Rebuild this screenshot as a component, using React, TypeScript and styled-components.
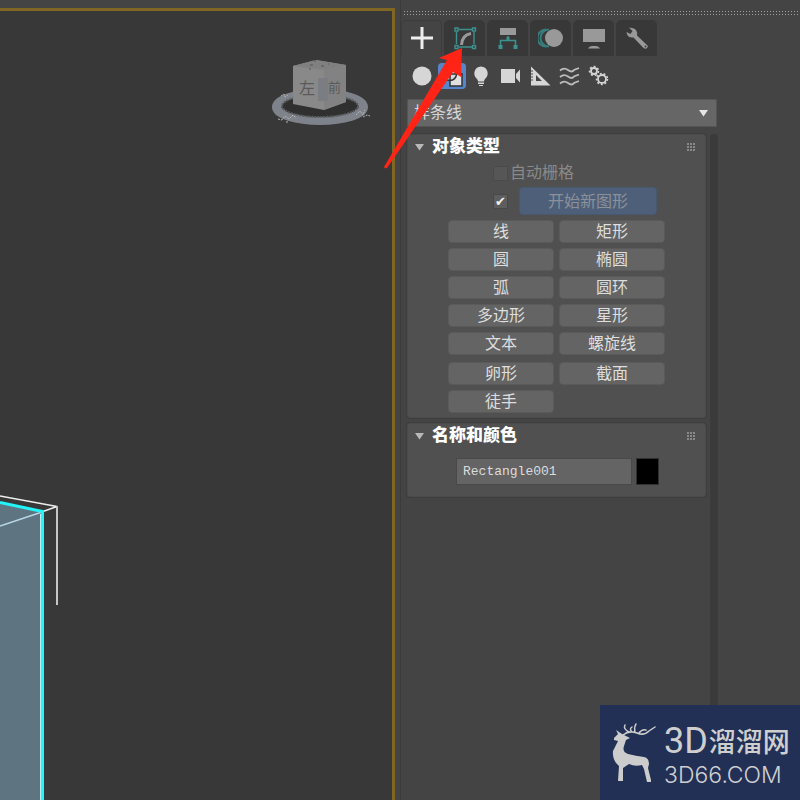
import React from "react";
import styled, { createGlobalStyle } from "styled-components";

const GlobalStyle = createGlobalStyle`
  *, *::before, *::after { box-sizing: border-box; }
  body { margin: 0; background: #444444; }
  button, input, select { font: inherit; color: inherit; margin: 0; }
`;

const sans = `"Liberation Sans", "Noto Sans CJK SC", sans-serif`;

const Workspace = styled.div`
  position: relative;
  display: flex;
  min-height: 100vh;
  background: #444444;
  color: #dedede;
  font-family: ${sans};
  font-size: 16px;
  line-height: 20px;
  overflow: hidden;
`;

const Viewport = styled.main`
  position: relative;
  flex: 1;
  min-width: 0;
  margin-top: 8px;
  background: #383838;
  border-top: 3px solid #806824;
  border-right: 3px solid #806824;
  overflow: hidden;
`;

const ViewCube = styled.svg`
  position: absolute;
  top: 43px;
  right: 17px;
`;

const SceneBox = styled.svg`
  position: absolute;
  left: 0;
  top: 479px;
`;

const CommandPanel = styled.aside`
  position: relative;
  display: flex;
  flex-direction: column;
  width: 400px;
  margin-left: 5px;
  border-left: 1px solid #3b3b3b;
`;

const Grip = styled.div`
  height: 6px;
  margin: 10px 0 4px 2px;
  background-image: radial-gradient(circle, #a0a0a0 1px, transparent 1px);
  background-size: 3px 3px;
`;

const Tabs = styled.nav`
  display: flex;
  gap: 2px;
`;

const Tab = styled.button<{ $active?: boolean }>`
  display: flex;
  align-items: center;
  justify-content: center;
  width: 41px;
  height: 36px;
  padding: 0;
  border: 1px solid ${(p) => (p.$active ? "#3c3c3c" : "#383838")};
  border-bottom-color: ${(p) => (p.$active ? "#444444" : "#383838")};
  border-radius: 5px 5px 0 0;
  background: ${(p) => (p.$active ? "#444444" : "#383838")};
`;

const Categories = styled.div`
  display: flex;
  gap: 3px;
  padding: 7px 0 10px 8px;
`;

const Category = styled.button<{ $active?: boolean }>`
  display: flex;
  align-items: center;
  justify-content: center;
  width: ${(p) => (p.$active ? "28px" : "26px")};
  height: 26px;
  padding: 0;
  border: 0;
  border-radius: 4px;
  background: ${(p) => (p.$active ? "#5586cb" : "transparent")};
`;

const SelectWrap = styled.label`
  display: grid;
  width: 310px;
  margin-left: 6px;
  align-items: center;

  > * { grid-area: 1 / 1; }
  > svg { justify-self: end; margin-right: 9px; pointer-events: none; }
`;

const Select = styled.select`
  appearance: none;
  height: 28px;
  padding: 0 24px 0 6px;
  border: 1px solid #555555;
  border-radius: 1px;
  background: #666666;
  color: #d8d8d8;
`;

const ScrollArea = styled.div`
  display: flex;
  flex: 1;
  gap: 4px;
  padding: 7px 0 0 6px;
`;

const Rollouts = styled.div`
  display: flex;
  flex-direction: column;
  gap: 5px;
  width: 299px;
`;

const ScrollTrack = styled.div`
  width: 8px;
  border-radius: 4px 4px 0 0;
  background: #3b3b3b;
`;

const Rollout = styled.section`
  padding-bottom: 5px;
  border: 1px solid #4b4b4b;
  border-radius: 3px;
  background: #505050;
  box-shadow: 0 0 0 1px #3e3e3e;
`;

const RolloutHeader = styled.button`
  display: flex;
  align-items: center;
  width: 100%;
  height: 24px;
  padding: 0 9px 0 7px;
  border: 0;
  background: none;
  color: #ffffff;
  text-align: left;
`;

const Title = styled.span`
  flex: 1;
  margin-left: 8px;
  font-size: 17px;
  font-weight: 900;
`;

const OptionRow = styled.div<{ $disabled?: boolean }>`
  display: flex;
  align-items: center;
  height: 28px;
  padding-left: 85px;
  color: ${(p) => (p.$disabled ? "#898989" : "#dedede")};
`;

const Check = styled.input`
  appearance: none;
  display: grid;
  place-items: center;
  width: 15px;
  height: 15px;
  border: 1px solid #484848;
  border-radius: 1px;
  background: #5e5e5e;

  &:disabled { background: #565656; border-color: #4a4a4a; }
  &:checked::before {
    content: "✔";
    color: #f2f2f2;
    font: 13px/13px "DejaVu Sans", sans-serif;
  }
`;

const CheckLabel = styled.label`
  margin-left: 2px;
`;

const StartShape = styled.button`
  width: 138px;
  height: 28px;
  margin-left: 11px;
  padding: 2px 0 0;
  border: 1px solid #485870;
  border-radius: 4px;
  background: #4e5f79;
  color: #8c9199;
`;

const ObjectGrid = styled.div`
  display: grid;
  grid-template-columns: 106px 106px;
  grid-template-rows: repeat(4, 22px) 24px repeat(2, 22px);
  gap: 6px 5px;
  margin: 5px 0 0 40px;
`;

const ObjectButton = styled.button`
  height: 23px;
  padding: 0;
  border: 1px solid #5a5a5a;
  border-radius: 4px;
  background: #646464;
  color: #dedede;
  line-height: 20px;
`;

const NameRow = styled.div`
  display: flex;
  align-items: center;
  gap: 4px;
  padding: 10px 0 6px 48px;
`;

const NameInput = styled.input`
  width: 176px;
  height: 27px;
  padding: 0 6px;
  border: 1px solid #494949;
  background: #646464;
  color: #dcdcdc;
  font-family: "Liberation Mono", monospace;
  font-size: 13px;
`;

const Swatch = styled.button`
  width: 23px;
  height: 27px;
  padding: 0;
  border: 1px solid #303030;
  background: #000000;
`;

const Pointer = styled.svg`
  position: absolute;
  left: -21px;
  top: 44px;
  pointer-events: none;
`;

const Brand = styled.div`
  position: absolute;
  right: 0;
  bottom: 0;
  display: flex;
  gap: 8px;
  width: 200px;
  height: 95px;
  padding: 18px 0 0 12px;
  background: #233056;
  color: #cfcfcf;
`;

const BrandText = styled.div`
  display: flex;
  flex-direction: column;
  white-space: nowrap;
`;

const BrandName = styled.div`
  display: flex;
  align-items: center;
  gap: 1px;
  height: 36px;
  font-family: Roboto, sans-serif;
  font-size: 36px;
  line-height: 36px;
`;

const BrandHan = styled.span`
  font-family: "Noto Sans CJK SC", sans-serif;
  font-size: 27px;
  font-weight: 500;
`;

const BrandSite = styled.div`
  font-family: Inter, sans-serif;
  font-size: 23px;
  font-weight: 300;
  line-height: 24px;
  margin-top: 4px;
`;

const DownArrow = ({ color = "#b8b8b8" }: { color?: string }) => (
  <svg width="9" height="8" viewBox="0 0 9 8" aria-hidden="true">
    <path d="M0 1H9L4.5 7.5Z" fill={color} />
  </svg>
);

const Dots = () => (
  <svg width="9" height="9" viewBox="0 0 9 9" fill="#898989" aria-hidden="true">
    {[0, 3, 6].map((y) => [0, 3, 6].map((x) => <rect key={`${x}${y}`} x={x} y={y} width="2" height="2" />))}
  </svg>
);

const gear = (cx: number, cy: number, r: number, teeth: number) => (
  <g fill="none" stroke="#d6d6d6">
    <circle cx={cx} cy={cy} r={r} strokeWidth="1.800" />
    <circle cx={cx} cy={cy} r={r + 1.5} strokeWidth="1.500" strokeDasharray={`${((r + 1.5) * Math.PI) / teeth}`} />
  </g>
);

const tabs: { name: string; icon: React.ReactNode }[] = [
  { name: "创建", icon: <path d="M13 2V24M2 13H24" stroke="#eeeeee" strokeWidth="3" fill="none" /> },
  {
    name: "修改",
    icon: (
      <g fill="none" stroke="#3c9290" strokeWidth="1.4">
        <path d="M7 4.5H20M7 22H20M4.5 7V19M22 7V19" />
        <path d="M3 3h3v3H3ZM20.500 3h3v3h-3ZM3 20.500h3v3H3ZM20.500 20.500h3v3h-3Z" />
        <path d="M9.500 20Q10 10 19 8.500" stroke="#999" strokeWidth="3" />
      </g>
    ),
  },
  {
    name: "层次",
    icon: (
      <g>
        <path d="M5 3H21V10H5Z" fill="#999" />
        <path d="M13 11V15M5.500 20V15.500H20.500V20" stroke="#3c9290" strokeWidth="1.5" fill="none" />
        <path d="M3.500 20h4v4h-4ZM18.500 20h4v4h-4ZM11.500 12h3v4h-3Z" fill="#3c9290" />
      </g>
    ),
  },
  {
    name: "运动",
    icon: (
      <g>
        <path d="M8 4.500A8.500 8.500 0 0 0 8 21.500M11 4.500A8.500 8.500 0 0 0 11 21.500" fill="none" stroke="#367d7c" strokeWidth="2" />
        <circle cx="16" cy="13" r="9" fill="#999" />
      </g>
    ),
  },
  { name: "显示", icon: <path d="M2 4H24V17H2ZM7 23.500Q8 21 11 21H15Q18 21 19 23.500Z" fill="#999" /> },
  {
    name: "实用程序",
    icon: (
      <g>
        <path d="M8 3 5 2.500 8.500 6 6.500 9 2.500 7Q3 13 9.500 12.500L19.500 23Q23 25 24 21L13 10.500Q14 4 8 3Z" fill="#999" />
        <circle cx="21.500" cy="21.500" r="1" fill="#444" />
      </g>
    ),
  },
];

const categories: { name: string; icon: React.ReactNode }[] = [
  { name: "几何体", icon: <circle cx="11" cy="11" r="9.500" fill="#d6d6d6" /> },
  {
    name: "图形",
    icon: (
      <g>
        <path d="M9 9H21V21H9Z" fill="#e0e0e0" stroke="#333" strokeWidth="1.500" />
        <circle cx="9" cy="9" r="6.500" fill="#d6d6d6" stroke="#333" strokeWidth="1.500" />
        <path d="M9 15.500V9H15.500" fill="none" stroke="#333" strokeWidth="1.500" />
      </g>
    ),
  },
  {
    name: "灯光",
    icon: (
      <g fill="#d6d6d6">
        <path d="M10 1.500A7 7 0 0 0 6 14Q7 15 7 16.500H13Q13 15 14 14A7 7 0 0 0 10 1.500Z" />
        <path d="M7 17.500h6v1.500H7ZM8 20h4v1H8Z" />
      </g>
    ),
  },
  { name: "摄影机", icon: <path d="M1 4H15V18H1ZM16 9 20 4.500V17.500L16 13Z" fill="#d6d6d6" /> },
  {
    name: "辅助对象",
    icon: (
      <g>
        <path fillRule="evenodd" d="M2 1.500 21.500 20.500H2ZM7 10V16H13Z" fill="#d6d6d6" />
        <path d="M2 6H4M2 9H4M2 12H4M2 15H4" stroke="#444" />
      </g>
    ),
  },
  {
    name: "空间扭曲",
    icon: <path d="M2 5.500Q6 2 10 5T16 5L21 3M2 12Q6 8.500 10 11.500T16 11.500L21 9.500M2 18.500Q6 15 10 18T16 18L21 16" fill="none" stroke="#bdbdbd" strokeWidth="1.8" />,
  },
  { name: "系统", icon: <g>{gear(7, 6, 3, 7)}{gear(15, 14, 4, 9)}</g> },
];

const objects = ["线", "矩形", "圆", "椭圆", "弧", "圆环", "多边形", "星形", "文本", "螺旋线", "卵形", "截面", "徒手"];

export default function App() {
  return (
    <Workspace>
      <GlobalStyle />
      <Viewport>
        <ViewCube width="108" height="74" viewBox="267 54 108 74" aria-label="ViewCube">
          <ellipse cx="320" cy="107" rx="43.500" ry="13.500" fill="#303030" stroke="#7e828a" strokeWidth="9" />
          <ellipse cx="320" cy="106" rx="38" ry="11" fill="#303030" stroke="#5b5d61" strokeWidth="2" strokeDasharray="2 1" />
          <path d="M293 66 316 60 346 65V102L324 110 293 104Z" fill="#898989" />
          <path d="M293 66 316 60 346 65 324 70Z" fill="#808080" />
          <path d="M324 70 346 65V102L324 110Z" fill="#828282" />
          <path d="M318 78H328V101H318Z" fill="#7a7d81" />
          <g fill="#5a5a5a" fontFamily="Noto Sans CJK SC, sans-serif">
            <text x="299" y="94" fontSize="16">左</text>
            <text x="328" y="92" fontSize="13">前</text>
          </g>
          <path d="M310 65h3M321 66h3M314 61h2M328 64h1M309 69h2" stroke="#555" />
          <path d="M281 96l3-2 1 3 3-2M278 119l4 1 3-4 4 3 4-4 3 3M286 122h3M356 115l4-4 3 4 2-5M363 117l4-2 3 1" fill="none" stroke="#b5b5b5" strokeDasharray="2 1" />
        </ViewCube>
        <SceneBox width="60" height="310" viewBox="0 490 60 310" aria-hidden="true">
          <path d="M0 502 43 511V800H0Z" fill="#5e7581" />
          <path d="M0 496 57 506.500M43 511.500 57 506.500" stroke="#eeeeee" strokeWidth="1.500" fill="none" />
          <path d="M57 506V605" stroke="#c6c6c6" strokeWidth="2" />
          <path d="M0 526 42 512" stroke="#b6d7e5" strokeWidth="1.500" />
          <path d="M0 502.500 42.500 511.500V800" fill="none" stroke="#21f4fa" strokeWidth="3" />
          <path d="M40.500 514V800" stroke="#bdebf2" strokeWidth="1" />
        </SceneBox>
      </Viewport>

      <CommandPanel>
        <Grip />
        <Tabs aria-label="命令面板">
          {tabs.map((tab, i) => (
            <Tab key={tab.name} $active={i === 0} aria-label={tab.name}>
              <svg width="26" height="26" viewBox="0 0 26 26">{tab.icon}</svg>
            </Tab>
          ))}
        </Tabs>
        <Categories>
          {categories.map((category, i) => (
            <Category key={category.name} $active={i === 1} aria-label={category.name}>
              <svg width="22" height="22" viewBox="0 0 22 22">{category.icon}</svg>
            </Category>
          ))}
        </Categories>
        <SelectWrap>
          <Select aria-label="图形类别" defaultValue="样条线">
            <option>样条线</option>
          </Select>
          <DownArrow color="#e6e6e6" />
        </SelectWrap>
        <ScrollArea>
          <Rollouts>
            <Rollout>
              <RolloutHeader aria-expanded="true">
                <DownArrow />
                <Title>对象类型</Title>
                <Dots />
              </RolloutHeader>
              <OptionRow $disabled>
                <Check type="checkbox" id="auto-grid" disabled />
                <CheckLabel htmlFor="auto-grid">自动栅格</CheckLabel>
              </OptionRow>
              <OptionRow>
                <Check type="checkbox" aria-label="开始新图形" defaultChecked />
                <StartShape disabled>开始新图形</StartShape>
              </OptionRow>
              <ObjectGrid>
                {objects.map((name) => (
                  <ObjectButton key={name}>{name}</ObjectButton>
                ))}
              </ObjectGrid>
            </Rollout>
            <Rollout>
              <RolloutHeader aria-expanded="true">
                <DownArrow />
                <Title>名称和颜色</Title>
                <Dots />
              </RolloutHeader>
              <NameRow>
                <NameInput aria-label="对象名称" defaultValue="Rectangle001" />
                <Swatch aria-label="对象颜色" />
              </NameRow>
            </Rollout>
          </Rollouts>
          <ScrollTrack />
        </ScrollArea>
        <Pointer width="86" height="128" viewBox="380 44 86 128" aria-hidden="true">
          <path d="M462 48 439 58 447 60 384 167Q385 169 387 168L453 72 461 77Z" fill="#ff2416" />
        </Pointer>
      </CommandPanel>

      <Brand>
        <svg width="44" height="60" viewBox="0 0 44 60" aria-hidden="true">
          <path d="M2 15 6 11 4 7 10 11 14 13 18 15 14 17 12 23Q10 29 16 31 24 33 32 34 37 35 37 41L36 45 39 57V59H35L32 46 30 42Q23 44 17 41L11 45 11 58H6L7 43Q0 37 1 28L6 18 2 17Z" fill="#cccccc" />
          <path d="M11 12Q17 7 25 10 32 13 37 8L43 4M17 9Q11 6 13 2M20 9Q17 6 20 4M23 9Q22 4 24 1M27 10Q30 6 34 7" fill="none" stroke="#cccccc" strokeWidth="1.500" strokeLinecap="round" />
        </svg>
        <BrandText>
          <BrandName>3D<BrandHan>溜溜网</BrandHan></BrandName>
          <BrandSite>3D66.COM</BrandSite>
        </BrandText>
      </Brand>
    </Workspace>
  );
}
